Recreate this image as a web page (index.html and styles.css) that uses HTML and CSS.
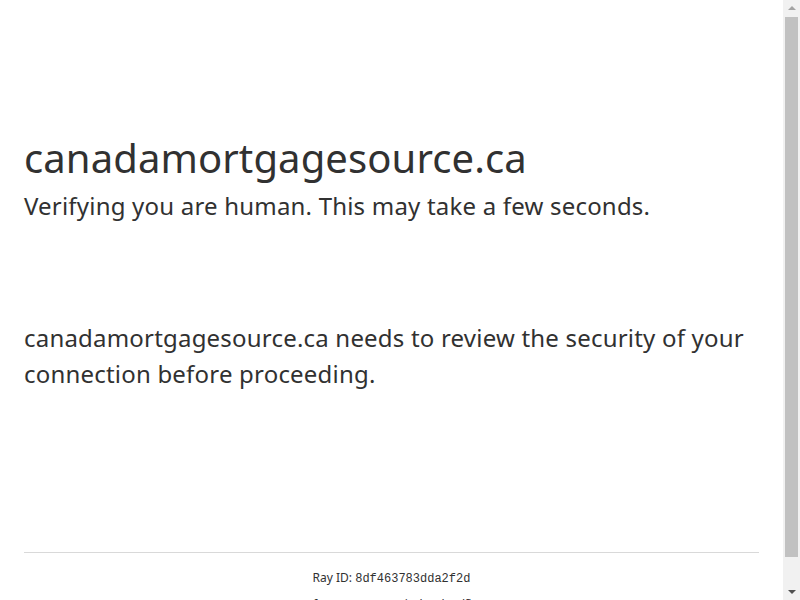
FILE: index.html
```
<!DOCTYPE html>
<html lang="en-US">
<head>
    <meta charset="UTF-8">
    <title>Just a moment...</title>
    <meta name="viewport" content="width=device-width, initial-scale=1">
    <link rel="stylesheet" href="styles.css">
</head>
<body>
    <div class="main-wrapper" role="main">
        <div class="main-content">
            <h1 class="zone-name-title">canadamortgagesource.ca</h1>
            <p class="h2 spacer-bottom">Verifying you are human. This may take a few seconds.</p>
            <div class="challenge-stage"></div>
            <div class="core-msg">canadamortgagesource.ca needs to review the security of your connection before proceeding.</div>
        </div>
    </div>
    <div class="footer" role="contentinfo">
        <div class="footer-inner">
            <div class="text-center">Ray ID: <code class="ray-id">8df463783dda2f2d</code></div>
            <div class="text-center footer-text">Performance &amp; security by <a href="#">Cloudflare</a></div>
        </div>
    </div>

    <div class="scrollbar">
        <span class="arrow arrow-up"></span>
        <span class="thumb"></span>
        <span class="arrow arrow-down"></span>
    </div>
</body>
</html>
```

FILE: styles.css
```
* {
    box-sizing: border-box;
    margin: 0;
    padding: 0;
}

html {
    line-height: 1.15;
    color: #313131;
    font-family: "Noto Sans", "Open Sans", "DejaVu Sans", sans-serif;
}

body {
    display: flex;
    flex-direction: column;
    min-height: 100vh;
    margin-right: 17px;
    background-color: #fff;
}

.main-wrapper {
    display: flex;
    flex: 1;
    flex-direction: column;
    align-items: center;
}

.main-content {
    margin: 8rem auto;
    max-width: 60rem;
    width: 100%;
    padding-left: 1.5rem;
    padding-right: 1.5rem;
}

.zone-name-title {
    font-size: 2.5rem;
    font-weight: 400;
    line-height: 3.75rem;
    letter-spacing: .1px;
}

.h2 {
    font-size: 1.5rem;
    font-weight: 400;
    line-height: 2.25rem;
    letter-spacing: .2px;
}

.challenge-stage {
    height: 2rem;
    margin: 2rem 0 0;
}

.core-msg {
    font-size: 1.5rem;
    line-height: 2.25rem;
    letter-spacing: .2px;
    margin: 2rem 0;
}

.footer {
    font-size: .75rem;
    line-height: 1.125rem;
    max-width: 60rem;
    width: 100%;
    margin: 0 auto;
    padding-left: 1.5rem;
    padding-right: 1.5rem;
}

.footer-inner {
    border-top: 1px solid #d9d9d9;
    padding-top: 1rem;
    padding-bottom: 1rem;
}

.text-center {
    text-align: center;
}

.ray-id {
    font-family: "Liberation Mono", "DejaVu Sans Mono", monospace;
    font-size: .75rem;
}

.footer-text {
    margin-top: .5rem;
    letter-spacing: -.5px;
}

.footer-text a {
    color: #313131;
    text-decoration: none;
}

.scrollbar {
    position: fixed;
    top: 0;
    right: 0;
    width: 17px;
    height: 100vh;
    background-color: #f1f1f1;
    display: flex;
    flex-direction: column;
    align-items: center;
}

.arrow {
    width: 0;
    height: 0;
    border-left: 4px solid transparent;
    border-right: 4px solid transparent;
    margin: 6px 0;
}

.arrow-up {
    border-bottom: 4px solid #a3a3a3;
}

.arrow-down {
    border-top: 4px solid #505050;
}

.thumb {
    flex: 1;
    width: 13px;
    margin-top: 1px;
    margin-bottom: 27px;
    background-color: #c1c1c1;
}
```
